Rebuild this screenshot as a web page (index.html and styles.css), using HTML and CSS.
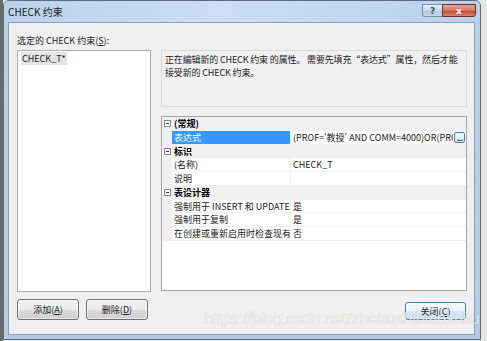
FILE: index.html
```html
<!DOCTYPE html>
<html lang="zh-CN">
<head>
  <meta charset="UTF-8">
  <meta name="viewport" content="width=device-width, initial-scale=1.0">
  <title>CHECK 约束</title>
  <link rel="stylesheet" href="styles.css">
</head>
<body>
  <div class="desktop">
    <div class="window">
      <div class="titlebar">
        <span class="title">CHECK 约束</span>
        <div class="caption-btns">
          <span class="cap-btn cap-help">?</span>
          <span class="cap-btn cap-close">x</span>
        </div>
      </div>

      <div class="client">
        <div class="left-col">
          <div class="label">选定的 CHECK 约束(<u>S</u>):</div>
          <div class="listbox">
            <div class="list-item">CHECK_T*</div>
          </div>
          <div class="btn-row">
            <button class="btn">添加(<u>A</u>)</button>
            <button class="btn">删除(<u>D</u>)</button>
          </div>
        </div>

        <div class="right-col">
          <div class="desc">正在编辑新的 CHECK 约束 的属性。 需要先填充“表达式”属性，然后才能<br>接受新的 CHECK 约束。</div>

          <div class="grid">
            <div class="cat"><span class="gutter"><span class="toggle"></span></span><span class="cat-name">(常规)</span></div>
            <div class="prop">
              <span class="gutter"></span>
              <span class="name selected">表达式</span>
              <span class="value">
                <span class="value-text">(PROF='教授' AND COMM=4000)OR(PROF='副教授' AND COMM=2000)</span>
                <span class="ellipsis">...</span>
              </span>
            </div>
            <div class="cat"><span class="gutter"><span class="toggle"></span></span><span class="cat-name">标识</span></div>
            <div class="prop"><span class="gutter"></span><span class="name">(名称)</span><span class="value">CHECK_T</span></div>
            <div class="prop"><span class="gutter"></span><span class="name">说明</span><span class="value"></span></div>
            <div class="cat"><span class="gutter"><span class="toggle"></span></span><span class="cat-name">表设计器</span></div>
            <div class="prop"><span class="gutter"></span><span class="name">强制用于 INSERT 和 UPDATE</span><span class="value">是</span></div>
            <div class="prop"><span class="gutter"></span><span class="name">强制用于复制</span><span class="value">是</span></div>
            <div class="prop"><span class="gutter"></span><span class="name">在创建或重新启用时检查现有数据</span><span class="value">否</span></div>
          </div>

          <div class="footer">
            <button class="btn btn-default">关闭(<u>C</u>)</button>
          </div>
        </div>
      </div>

      <div class="watermark">https://blog.csdn.net/zhebushibiaoshifu</div>
    </div>
  </div>
</body>
</html>
```

FILE: styles.css
```css
body {
  margin: 0;
  font-family: "Noto Sans CJK SC", "Noto Sans", sans-serif;
  font-size: 9px;
  color: #000;
}

.desktop {
  width: 487px;
  height: 341px;
  padding-left: 3px;
  box-sizing: border-box;
  background: linear-gradient(to right, #6a6a6a 0, #6a6a6a 3px, #e6e6e6 3px);
  overflow: hidden;
}

.window {
  position: relative;
  width: 478px;
  height: 340px;
  box-sizing: border-box;
  border: 1px solid #5d6b7e;
  border-radius: 6px 6px 0 0;
  padding: 0 5px 4px 4px;
  background: linear-gradient(to bottom, #bcd4ee 0, #b6cfea 40px, #b3cbe6 100%);
  display: flex;
  flex-direction: column;
}

/* title bar */
.titlebar {
  height: 21px;
  display: flex;
  justify-content: space-between;
  align-items: flex-start;
  background: linear-gradient(100deg, #b9d1eb 0, #cadff4 45%, #b8d1ec 100%);
  margin: 0 -5px 0 -4px;
  padding: 0 4px 0 4px;
  border-radius: 5px 5px 0 0;
}

.title {
  font-size: 10px;
  line-height: 21px;
  color: #1a1a1a;
}

.caption-btns {
  display: flex;
  margin-top: 3px;
}

.cap-btn {
  height: 13px;
  line-height: 12px;
  text-align: center;
  box-sizing: border-box;
  font-family: "DejaVu Sans", sans-serif;
  font-weight: bold;
}

.cap-help {
  width: 20px;
  font-size: 9px;
  color: #3d4f66;
  border: 1px solid #7c8ea6;
  border-right: none;
  border-radius: 0 0 0 3px;
  background: linear-gradient(to bottom, #e7eff8 0, #cbd9e9 50%, #b4c8de 51%, #c9d9ea 100%);
}

.cap-close {
  width: 34px;
  font-size: 9px;
  color: #fff;
  border: 1px solid #6e2e26;
  border-radius: 0 0 3px 0;
  background: linear-gradient(to bottom, #e9a99c 0, #d47565 50%, #c2432f 51%, #d6836f 100%);
}

/* client area */
.client {
  flex: 1;
  display: flex;
  gap: 10px;
  border: 1px solid #8b9fba;
  background: #f0f0f0;
  padding: 0 7px 0 8px;
}

.left-col {
  width: 134px;
  display: flex;
  flex-direction: column;
}

.label {
  padding-top: 11px;
  line-height: 13px;
  margin-bottom: 3px;
  color: #222;
}

.listbox {
  height: 242px;
  box-sizing: border-box;
  border: 1px solid #adadad;
  background: #fff;
  padding: 1px 3px;
}

.list-item {
  display: inline-block;
  line-height: 13px;
  padding: 0 1px;
  background: #e4e4e4;
  color: #222;
}

.btn-row {
  display: flex;
  gap: 7px;
  margin-top: 7px;
}

.btn {
  width: 62px;
  height: 21px;
  padding: 0;
  font: inherit;
  color: #222;
  border: 1px solid #707070;
  border-radius: 3px;
  background: linear-gradient(to bottom, #f2f2f2 0, #ebebeb 50%, #dddddd 51%, #cfcfcf 100%);
  box-shadow: inset 0 0 0 1px rgba(255, 255, 255, 0.6);
}

.right-col {
  flex: 1;
  display: flex;
  flex-direction: column;
  padding-top: 27px;
}

.desc {
  height: 57px;
  box-sizing: border-box;
  border: 1px solid #d9d9d9;
  padding: 2px 3px;
  line-height: 13px;
  letter-spacing: -0.15px;
  white-space: nowrap;
  overflow: hidden;
  color: #222;
}

/* property grid */
.grid {
  height: 175px;
  box-sizing: border-box;
  margin-top: 9px;
  border: 1px solid #a5a5a5;
  background: #fff;
}

.cat,
.prop {
  height: 13.75px;
  line-height: 13px;
  display: grid;
  grid-template-columns: 10px 119px 1fr;
}

.cat {
  background: #f0f0f0;
}

.cat-name {
  grid-column: 2 / 4;
  font-weight: bold;
  padding-left: 2px;
}

.gutter {
  background: #f0f0f0;
  display: flex;
  align-items: center;
  justify-content: center;
}

.toggle {
  position: relative;
  width: 7px;
  height: 7px;
  box-sizing: border-box;
  border: 1px solid #8a8a8a;
  background: #fff;
}

.toggle::after {
  content: "";
  position: absolute;
  left: 1px;
  top: 2px;
  width: 3px;
  height: 1px;
  background: #333;
}

.prop .name,
.prop .value {
  border-bottom: 1px solid #f0f0f0;
  white-space: nowrap;
  overflow: hidden;
  box-sizing: border-box;
}

.prop .name {
  padding-left: 2px;
  border-right: 1px solid #f0f0f0;
  color: #222;
}

.prop .name.selected {
  background: #3399ff;
  color: #fff;
}

.prop .value {
  padding-left: 2px;
  display: flex;
  color: #222;
}

.value-text {
  flex: 1;
  overflow: hidden;
  white-space: nowrap;
}

.ellipsis {
  flex: none;
  width: 11px;
  height: 11px;
  margin: 1px 1px 0 1px;
  padding-top: 3px;
  box-sizing: border-box;
  border: 1px solid #3c7fb1;
  border-radius: 2px;
  background: linear-gradient(to bottom, #f4f9fd, #d8e9f6);
  overflow: hidden;
  font-family: "DejaVu Sans", sans-serif;
  font-size: 7px;
  font-weight: bold;
  line-height: 6px;
  letter-spacing: -0.8px;
  text-align: center;
  color: #222;
}

.footer {
  display: flex;
  justify-content: flex-end;
  margin-top: 11px;
  padding-right: 1px;
}

.btn-default {
  width: 61px;
  height: 18px;
  border-color: #3c7fb1;
  background: linear-gradient(to bottom, #f4f9fd 0, #e9f3fb 50%, #d6e8f6 51%, #c9e1f4 100%);
}

/* watermark overlay */
.watermark {
  position: absolute;
  left: 200px;
  top: 309px;
  font-family: "Liberation Sans", Arial, sans-serif;
  font-size: 16px;
  color: rgba(255, 255, 255, 0.8);
  text-shadow: 0 0 1px rgba(0, 0, 0, 0.25);
  white-space: nowrap;
}
```
